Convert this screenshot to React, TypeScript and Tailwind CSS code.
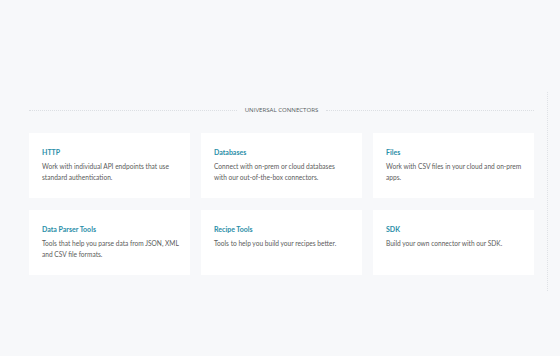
const CONNECTORS = [
  { name: "HTTP", lines: ["Work with individual API endpoints that use", "standard authentication."] },
  { name: "Databases", lines: ["Connect with on-prem or cloud databases", "with our out-of-the-box connectors."] },
  { name: "Files", lines: ["Work with CSV files in your cloud and on-prem", "apps."] },
  { name: "Data Parser Tools", lines: ["Tools that help you parse data from JSON, XML", "and CSV file formats."] },
  { name: "Recipe Tools", lines: ["Tools to help you build your recipes better."] },
  { name: "SDK", lines: ["Build your own connector with our SDK."] },
];

function ConnectorCard({ name, lines }: { name: string; lines: string[] }) {
  return (
    <div className="h-[65px] bg-white px-[13px] pt-[15px]">
      <h3 className="text-[7px] font-bold leading-[9px] text-[#2a8ea8]">{name}</h3>
      <p className="mt-[4px] text-[6.6px] leading-[11px] whitespace-nowrap text-[#5b5b5b]">
        {lines.map((l) => (
          <span key={l} className="block">
            {l}
          </span>
        ))}
      </p>
    </div>
  );
}

export default function App() {
  return (
    <div
      className="relative h-[356px] w-[560px] overflow-hidden bg-[#f7f8fa]"
      style={{ fontFamily: "Lato, 'Noto Sans', sans-serif" }}
    >
      {/* thin dotted rule down the right edge */}
      <div className="absolute left-[547px] top-[92px] h-[199px] border-l border-dotted border-[#dfe2e6]" />

      <section className="pl-[29px] pt-[105px]">
        <div className="flex w-[505px] items-center gap-[8px]">
          <div className="flex-1 border-t border-dotted border-[#dcdfe3]" />
          <span
            className="text-[6.1px] leading-[10px] text-[#555b60]"
            style={{ fontFamily: "'Open Sans', sans-serif" }}
          >
            UNIVERSAL CONNECTORS
          </span>
          <div className="flex-1 border-t border-dotted border-[#dcdfe3]" />
        </div>

        <div className="mt-[18px] grid w-[505px] grid-cols-3 gap-x-[11px] gap-y-[12px]">
          {CONNECTORS.map((c) => (
            <ConnectorCard key={c.name} {...c} />
          ))}
        </div>
      </section>
    </div>
  );
}
